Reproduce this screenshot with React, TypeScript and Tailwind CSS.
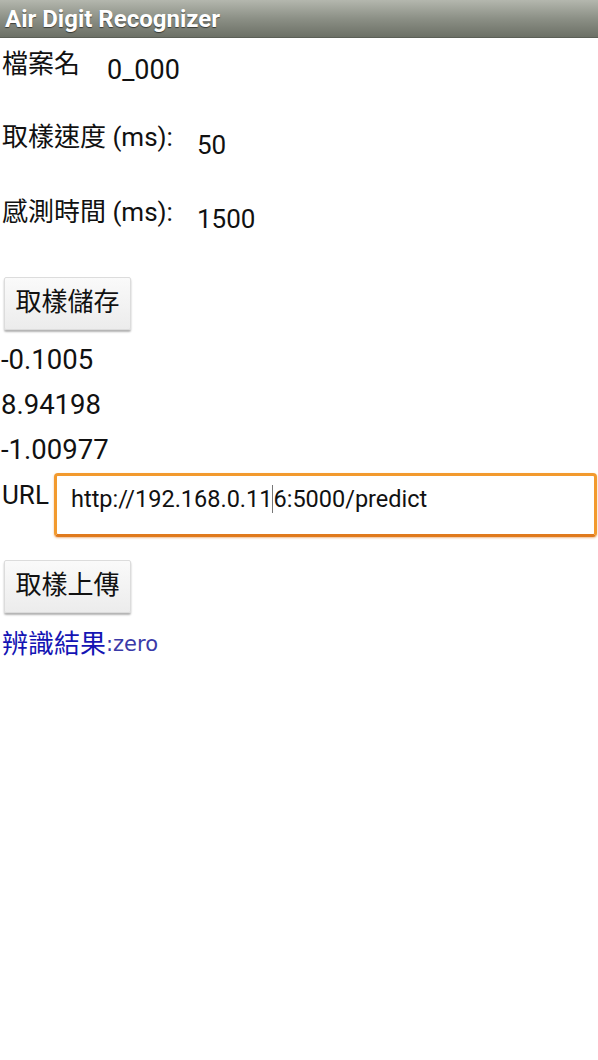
// Air Digit Recognizer screen

export default function App() {
  const font = "font-['Roboto','Noto_Sans_CJK_TC',sans-serif]";

  return (
    <div className={`w-[598px] h-[1060px] bg-white text-[#111] ${font}`}>
      {/* タイトルバー */}
      <div className="h-[38px] flex items-center px-[5px] bg-gradient-to-b from-[#b4b7ae] via-[#8c9086] to-[#6c7066] border-b border-[#5b5f56]">
        <span className="text-white font-bold text-[24px] leading-none [text-shadow:0_1px_1px_rgba(0,0,0,0.55)] font-['Roboto',sans-serif]">
          Air Digit Recognizer
        </span>
      </div>

      {/* ファイル名 */}
      <div className="mt-[11px] h-[30px] flex items-start text-[26px] leading-[30px] pl-[2px]">
        <span className="w-[105px] shrink-0">檔案名</span>
        <span className="mt-[6px] text-[27px]">0_000</span>
      </div>

      {/* サンプリング速度 */}
      <div className="mt-[43px] h-[30px] flex items-start text-[26px] leading-[30px] pl-[2px]">
        <span className="w-[195px] shrink-0">取樣速度 (ms):</span>
        <span className="mt-[8px]">50</span>
      </div>

      {/* 感測時間 */}
      <div className="mt-[45px] h-[30px] flex items-start text-[26px] leading-[30px] pl-[2px]">
        <span className="w-[195px] shrink-0">感測時間 (ms):</span>
        <span className="mt-[7px]">1500</span>
      </div>

      {/* 取樣儲存 */}
      <div className="mt-[50px] pl-[4px]">
        <button className="w-[127px] h-[53px] pb-[4px] rounded-[2px] bg-gradient-to-b from-[#fafafa] to-[#ececec] border border-[#dcdcdc] shadow-[0_2px_2px_rgba(0,0,0,0.3)] text-[26px] leading-none text-[#111]">
          取樣儲存
        </button>
      </div>

      {/* センサー値 */}
      <div className="mt-[7px] pl-[1px] text-[27.5px]">
        <div className="h-[45px] leading-[45px]">-0.1005</div>
        <div className="h-[45px] leading-[45px]">8.94198</div>
        <div className="h-[45px] leading-[45px]">-1.00977</div>
      </div>

      {/* URL */}
      <div className="mt-[1px] flex items-start pl-[2px]">
        <span className="w-[52px] shrink-0 text-[26px] leading-[30px] mt-[7px]">URL</span>
        <div className="flex-1 h-[64px] mr-[1px] rounded-[4px] border-[3px] border-[#f29a2e] border-b-[#e07a1c] shadow-[0_1px_2px_rgba(224,120,30,0.5)] flex items-start pl-[14px] pt-[8px]">
          <span className="text-[23.5px] leading-[30px] text-[#111] flex items-center">
            http://192.168.0.11
            <span className="inline-block w-px h-[28px] bg-[#777]" />
            6:5000/predict
          </span>
        </div>
      </div>

      {/* 取樣上傳 */}
      <div className="mt-[23px] pl-[4px]">
        <button className="w-[127px] h-[53px] pb-[4px] rounded-[2px] bg-gradient-to-b from-[#fafafa] to-[#ececec] border border-[#dcdcdc] shadow-[0_2px_2px_rgba(0,0,0,0.3)] text-[26px] leading-none text-[#111]">
          取樣上傳
        </button>
      </div>

      {/* 辨識結果 */}
      <div className="mt-[16px] pl-[2px] h-[30px] flex items-end text-[#1414b4]">
        <span className="text-[26px] leading-[30px]">辨識結果</span>
        <span className="text-[21px] leading-[30px] text-[#3a3aa8] font-['DejaVu_Sans',sans-serif]">:zero</span>
      </div>
    </div>
  );
}
